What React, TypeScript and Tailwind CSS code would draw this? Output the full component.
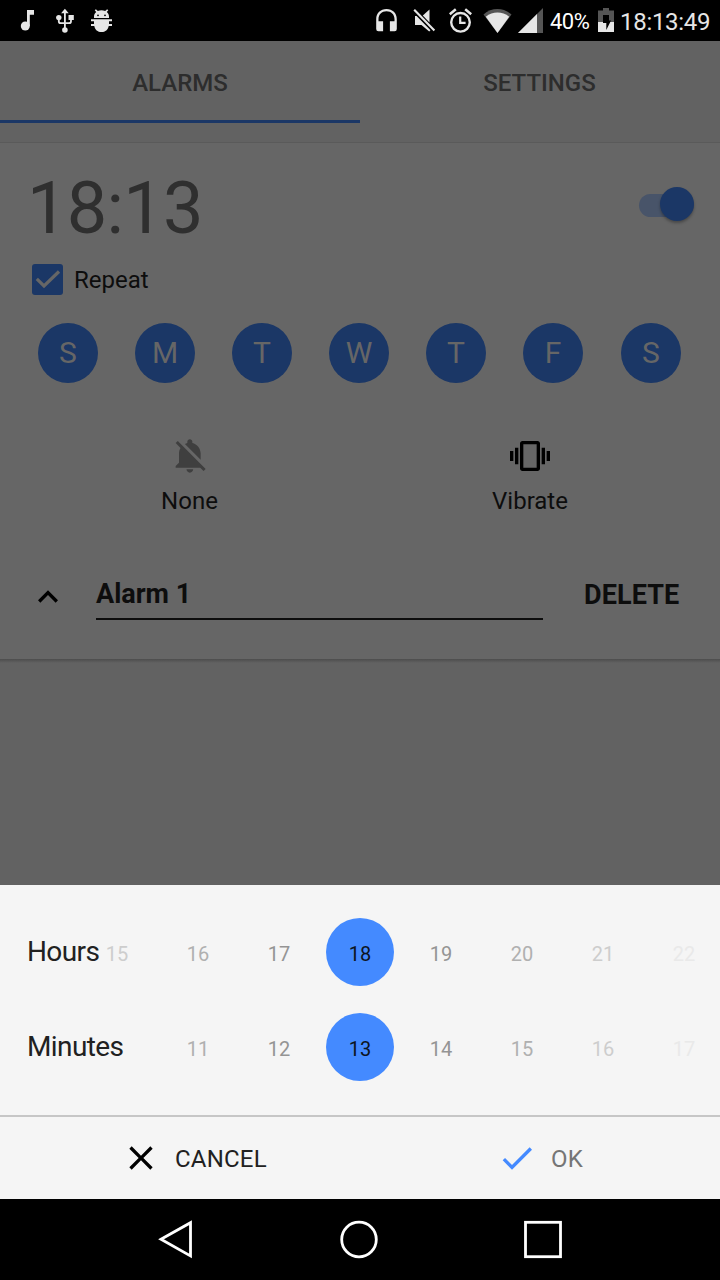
import React from "react";

const DAYS = ["S", "M", "T", "W", "T", "F", "S"];
const FADES = [
  "text-[#cdcdcd]",
  "text-[#b0b0b0]",
  "text-[#949494]",
  "text-[#0d1420]",
  "text-[#949494]",
  "text-[#b0b0b0]",
  "text-[#cdcdcd]",
  "text-[#e9e9e9]",
];

function StatusBar() {
  return (
    <header className="flex h-[41px] shrink-0 items-start bg-black pt-[7px] text-[#e6e6e6]">
      <svg className="ml-[20px] h-[27px] w-[16px]" viewBox="20 7 16 27" fill="currentColor">
        <circle cx="25.3" cy="26" r="4.5" />
        <path d="M27 10h7v4.8h-4.2V26H27z" />
      </svg>
      <svg className="ml-[19px] h-[27px] w-[20px]" viewBox="55 7 20 27" fill="currentColor">
        <path d="M64.900 8.800l3.800 4.400h-7.600z" />
        <path d="M64.900 12v18M58.800 18v3.200q0 2 2 2h8.200q2 0 2-2V18" fill="none" stroke="currentColor" strokeWidth="1.800" />
        <circle cx="58.800" cy="17.600" r="2.700" />
        <rect x="68.500" y="15" width="5.300" height="5" />
        <circle cx="64.900" cy="30" r="2.800" />
      </svg>
      <svg className="ml-[15px] h-[27px] w-[23px]" viewBox="90 7 23 27" fill="currentColor">
        <path d="M94 18v-1.500c0-2 .8-3.400 2.200-4.600l-1.500-1.700 1.200-1 1.900 1.700q3.700-1.200 7.400 0l1.900-1.700 1.200 1-1.500 1.700c1.400 1.200 2.200 2.600 2.200 4.600V18z" />
        <path d="M91 19.200h21v2h-3V24h3v2h-3.300c-.6 3.600-3.300 6.100-7.200 6.100s-6.600-2.500-7.200-6.100H91v-2h3v-2.800h-3z" />
        <circle cx="98" cy="15.300" r=".9" fill="black" />
        <circle cx="105" cy="15.300" r=".9" fill="black" />
      </svg>
      <svg className="ml-[262px] h-[27px] w-[24px]" viewBox="375 7 24 27" fill="currentColor">
        <path d="M376.200 19.200c0-6 4.300-10.200 10.300-10.200s10.300 4.200 10.300 10.200V29q0 2.200-2.200 2.200h-4.700V21.200h4.600v-2c0-4.700-3.300-7.900-8-7.900s-8 3.200-8 7.900v2h4.600v10h-4.700q-2.200 0-2.200-2.200z" />
      </svg>
      <svg className="ml-[13px] h-[27px] w-[24px]" viewBox="412 7 24 27" fill="currentColor">
        <path d="M429.500 9.500v13l-6.700-6.900z" />
        <path d="M415 16h1.600l13.900 14.200-1.300 1.200-7.700-6.500H415z" />
        <path d="M414.200 9.700l20.200 20.800" stroke="currentColor" strokeWidth="2.100" />
      </svg>
      <svg className="ml-[12px] h-[27px] w-[25px]" viewBox="448 7 25 27" fill="none" stroke="currentColor">
        <circle cx="460.500" cy="22.300" r="9.300" strokeWidth="2.400" />
        <path d="M460.200 16.500v6.300h5.400" strokeWidth="2.200" />
        <path d="M449.800 14.300l6-5M471.200 14.300l-6-5" strokeWidth="2.500" />
      </svg>
      <svg className="ml-[9px] h-[27px] w-[31px]" viewBox="482 7 31 27" fill="currentColor">
        <path d="M483.500 14.500c8-7.300 20-7.300 28 0L497.500 33z" fill="#555" />
        <path d="M485.800 16.800c7-5.600 16.400-5.600 23.400 0L497.500 33z" />
      </svg>
      <svg className="ml-[5px] h-[27px] w-[25px]" viewBox="518 7 25 27" fill="currentColor">
        <path d="M518 33l25-25v25z" fill="#555" />
        <path d="M518 33l19-19v19z" />
      </svg>
      <span className="ml-[7px] mt-[2px] w-[41px] text-[22px] leading-[26px] tracking-[-0.5px] text-white">40%</span>
      <svg className="ml-[7px] h-[27px] w-[16px]" viewBox="598 7 16 27" fill="currentColor">
        <path d="M598 10.500h5V8h6v2.500h5V32h-16z" fill="#555" />
        <path d="M598 22h16v10h-16z" />
        <path d="M603 15h6v5.500h2l-4.700 9.500v-7H603z" fill="black" />
      </svg>
      <span className="ml-[6px] mt-[1px] text-[24px] leading-[28px] tracking-[-0.3px]">18:13:49</span>
    </header>
  );
}

function Tabs() {
  return (
    <nav className="grid h-[102px] shrink-0 grid-cols-2 border-b border-[#5a5a5a] bg-[#626262] text-center text-[24px] leading-[28px] font-medium text-[#2d2d2d]">
      <div className="h-[82px] border-b-3 border-[#1b3766] pt-[28px]">ALARMS</div>
      <div className="pt-[28px] pr-px">SETTINGS</div>
    </nav>
  );
}

function AlarmCard() {
  return (
    <main className="flex h-[516px] shrink-0 flex-col bg-[#666]">
      <div className="flex h-[121px] items-start justify-between pl-[27px] pr-[26px]">
        <span className="mt-[24px] text-[72px] leading-[84px] tracking-[-0.7px] text-[#2f2f2f]">18:13</span>
        <span className="relative mt-[51px] h-[23px] w-[55px] rounded-full bg-[#485469]">
          <span className="absolute -top-[7px] right-0 size-[34px] rounded-full bg-[#1b3766] shadow-[0_2px_3px_rgba(0,0,0,0.3)]" />
        </span>
      </div>
      <div className="-mt-[1px] flex h-[32px] items-center pl-[31.500px] text-[24px] leading-[28px] text-[#0d0d0d]">
        <span className="flex size-[31px] items-center justify-center rounded-[3px] bg-[#1b3766]">
          <svg className="size-[31px]" viewBox="0 0 31 31" fill="none" stroke="#666" strokeWidth="3.200">
            <path d="M4.800 14.800l7.200 7.200L27 7.500" />
          </svg>
        </span>
        <span className="ml-[11.500px] mt-[1px]">Repeat</span>
      </div>
      <div className="mt-[28px] flex gap-[37px] pl-[38px]">
        {DAYS.map((day, i) => (
          <span
            key={i}
            className="flex size-[60px] shrink-0 items-center justify-center rounded-full bg-[#1b3766] text-[30px] leading-[36px] text-[#666] last:ml-[1px]"
          >
            {day}
          </span>
        ))}
      </div>
      <div className="mt-[53px] flex text-center text-[24px] leading-[28px] text-[#0d0d0d]">
        <div className="ml-[20px] flex w-[340px] flex-col items-center">
          <svg className="size-[40px]" viewBox="0 0 24 24" fill="#3f3f3f">
            <path d="M11.500 22c1.100 0 2-.9 2-2h-4c0 1.100.9 2 2 2zM18 10.500c0-3.070-2.130-5.640-5-6.320V3.500c0-.83-.67-1.500-1.500-1.500S10 2.670 10 3.500v.68c-.51.12-.99.32-1.450.56L18 14.180V10.500zm-.27 8.500l2 2L21 19.730 4.270 3 3 4.270l2.920 2.920C5.340 8.160 5 9.290 5 10.500V16l-2 2v1h14.730z" transform="translate(.4 0)" />
          </svg>
          <span className="mt-[11px] pr-px">None</span>
        </div>
        <div className="flex w-[340px] flex-col items-center">
          <svg className="size-[40px]" viewBox="0 0 24 24" fill="black">
            <path d="M0 15h2V9H0v6zm3 2h2V7H3v10zm19-8v6h2V9h-2zm-3 8h2V7h-2v10zM16.500 3h-9C6.670 3 6 3.670 6 4.500v15c0 .83.67 1.500 1.500 1.500h9c.83 0 1.500-.67 1.500-1.500v-15c0-.83-.67-1.500-1.500-1.500zM16 19H8V5h8v14z" />
          </svg>
          <span className="mt-[11px]">Vibrate</span>
        </div>
      </div>
      <div className="mt-[62px] flex items-start pl-[28px] text-[27px] leading-[32px] font-bold text-[#0d0d0d]">
        <svg className="size-[40px]" viewBox="0 0 24 24" fill="black">
          <path d="M12 8l-6 6 1.410 1.410L12 10.830l4.590 4.580L18 14z" />
        </svg>
        <span className="ml-[28px] h-[43px] w-[447px] border-b-2 border-[#0d0d0d] pt-[1px]">Alarm 1</span>
        <span className="ml-[41px] mt-[2px] tracking-[0.1px]">DELETE</span>
      </div>
    </main>
  );
}

function Wheel({ label, first, lead }: { label: string; first: number; lead?: boolean }) {
  return (
    <div className="relative flex h-[68px] overflow-hidden pl-[76px]">
      {FADES.map((fade, i) => (
        <span key={i} className="flex h-[68px] w-[81px] shrink-0 items-center justify-center">
          <span
            className={
              i === 3
                ? "flex size-[68px] items-center justify-center rounded-full bg-[#448aff] pt-[4px] pl-[1px] text-[20px] leading-[24px] text-[#0d1420]"
                : `pt-[4px] pl-[1px] text-[20px] leading-[24px] ${fade}`
            }
          >
            {i === 0 && lead ? "" : first + i}
          </span>
        </span>
      ))}
      <span className="absolute left-[27px] top-[18px] text-[28px] leading-[32px] tracking-[-0.6px] text-[#212121]">{label}</span>
    </div>
  );
}

function TimeSheet() {
  return (
    <section className="flex h-[314px] shrink-0 flex-col bg-[#f5f5f5] pt-[33px]">
      <Wheel label="Hours" first={15} />
      <div className="h-[27px]" />
      <Wheel label="Minutes" first={10} lead />
      <div className="mt-[34px] flex h-[84px] border-t-2 border-[#c6c6c6] pt-[21px] text-[24px] leading-[28px]">
        <button className="flex h-[40px] w-[376px] items-center pl-[121px] text-[#212121]">
          <svg className="size-[40px]" viewBox="0 0 24 24" fill="black">
            <path d="M19 6.410L17.590 5 12 10.590 6.410 5 5 6.410 10.590 12 5 17.590 6.410 19 12 13.410 17.590 19 19 17.590 13.410 12z" />
          </svg>
          <span className="ml-[14px] mt-[2px] tracking-[0.2px]">CANCEL</span>
        </button>
        <button className="flex h-[40px] items-center pl-[121px] text-[#757575]">
          <svg className="size-[40px]" viewBox="0 0 24 24" fill="#448aff">
            <path d="M9 16.170L4.830 12l-1.420 1.410L9 19 21 7l-1.410-1.410z" />
          </svg>
          <span className="ml-[14px] mt-[2px] tracking-[0.2px]">OK</span>
        </button>
      </div>
    </section>
  );
}

function NavBar() {
  return (
    <footer className="flex h-[81px] shrink-0 items-start bg-black pt-[20px]">
      <svg className="ml-[156px] size-[40px]" viewBox="156 1219 40 40" fill="none" stroke="white" strokeWidth="2.800">
        <path d="M161 1239.300l29.500-16.600v33.200z" />
      </svg>
      <svg className="ml-[143px] size-[40px]" viewBox="339 1219 40 40" fill="none" stroke="white" strokeWidth="2.800">
        <circle cx="359" cy="1239.500" r="17.300" />
      </svg>
      <svg className="ml-[144px] size-[40px]" viewBox="523 1219 40 40" fill="none" stroke="white" strokeWidth="2.800">
        <rect x="525.500" y="1222.300" width="35" height="34.400" />
      </svg>
    </footer>
  );
}

export default function App() {
  return (
    <div className="flex h-[1280px] w-[720px] flex-col overflow-hidden bg-[#626262] font-['Roboto',sans-serif] whitespace-nowrap">
      <StatusBar />
      <Tabs />
      <AlarmCard />
      <div className="h-[4px] bg-linear-to-b from-[#4d4d4d] to-[#626262]" />
      <div className="flex-1" />
      <TimeSheet />
      <NavBar />
    </div>
  );
}
